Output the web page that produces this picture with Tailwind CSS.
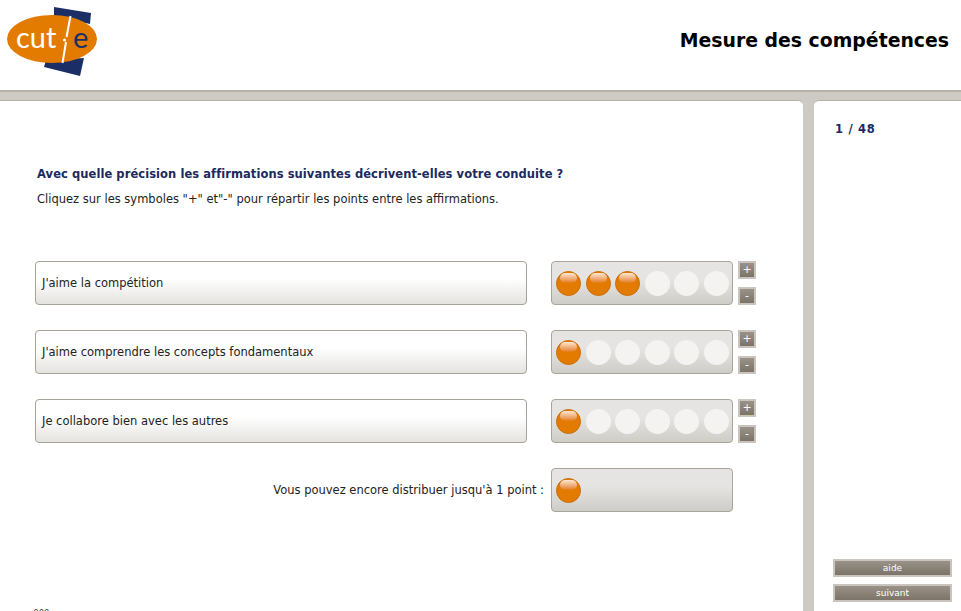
<!DOCTYPE html>
<html lang="fr">
<head>
  <meta charset="UTF-8" />
  <title>Mesure des compétences</title>
  <script src="https://cdn.jsdelivr.net/npm/@tailwindcss/browser@4"></script>
</head>
<body class="h-[611px] overflow-hidden bg-[#cdc9c3] font-['DejaVu_Sans',sans-serif] text-[11.5px] text-[#222]">
  <header class="h-[90px] bg-white flex justify-between">
    <svg class="w-[110px] h-[90px]" viewBox="0 0 110 90">
      <polygon points="54,7 91,13 90,24 54,16" fill="#1b2f66" />
      <polygon points="44,67 80,76 84,58 46,60" fill="#1b2f66" />
      <ellipse cx="52" cy="39" rx="45" ry="24" fill="#e37b00" />
      <path d="M70.5 16 L66.5 37 M66 42 L62.5 63" fill="none" stroke="#fff" stroke-width="2" />
      <circle cx="64.5" cy="40" r="1.5" fill="#fff" />
      <text x="16" y="48" font-family="Lato, sans-serif" font-size="29" fill="#fff">cut</text>
      <text x="73" y="48" font-family="Lato, sans-serif" font-size="29" fill="#1b2f66">e</text>
    </svg>
    <h1 class="pt-[28px] pr-[12px] text-[18.85px] leading-[26px] font-bold text-black">Mesure des compétences</h1>
  </header>

  <div class="h-[10px] border-t-2 border-[#b5b0a8]"></div>

  <main class="flex gap-[11px] h-[511px]">
    <section class="w-[803px] bg-white border-t border-[#b5b0a8] rounded-tr-[5px] pt-[66px] overflow-hidden">
      <h2 class="pl-[37px] leading-[14px] font-bold tracking-[0.07px] text-[#1b2a5e]">Avec quelle précision les affirmations suivantes décrivent-elles votre conduite ?</h2>
      <p class="pl-[37px] mt-[11px] leading-[14px]">Cliquez sur les symboles "+" et"-" pour répartir les points entre les affirmations.</p>

      <div class="mt-[55px] pl-[35px] flex flex-col gap-[25px]">
        <div class="flex items-center">
          <div class="w-[492px] h-[44px] flex items-center pl-[6px] pt-[2px] rounded-[4px] border border-[#a8a296] bg-gradient-to-b from-white from-40% to-[#e4e3e0]">J'aime la compétition</div>
          <div class="ml-[24px] w-[182px] h-[44px] flex items-center gap-[4.5px] pl-[4px] rounded-[4px] border border-[#aaa59b] bg-gradient-to-b from-[#e5e4e2] from-40% to-[#cfcdc8]">
            <span class="w-[25px] h-[25px] shrink-0 rounded-full border border-[#c96f08] bg-[#e37b00] flex justify-center pt-[1px]"><span class="w-[17px] h-[10px] rounded-full bg-gradient-to-b from-[#fbe6d2] to-[#e37b00]"></span></span>
            <span class="w-[25px] h-[25px] shrink-0 rounded-full border border-[#c96f08] bg-[#e37b00] flex justify-center pt-[1px]"><span class="w-[17px] h-[10px] rounded-full bg-gradient-to-b from-[#fbe6d2] to-[#e37b00]"></span></span>
            <span class="w-[25px] h-[25px] shrink-0 rounded-full border border-[#c96f08] bg-[#e37b00] flex justify-center pt-[1px]"><span class="w-[17px] h-[10px] rounded-full bg-gradient-to-b from-[#fbe6d2] to-[#e37b00]"></span></span>
            <span class="w-[25px] h-[25px] shrink-0 rounded-full bg-[#f4f3f1]"></span>
            <span class="w-[25px] h-[25px] shrink-0 rounded-full bg-[#f4f3f1]"></span>
            <span class="w-[25px] h-[25px] shrink-0 rounded-full bg-[#f4f3f1]"></span>
          </div>
          <div class="ml-[5px] flex flex-col gap-[8px]">
            <button class="w-[18px] h-[18px] border-2 border-[#c9c5be] bg-gradient-to-b from-[#9a9288] to-[#7c7468] text-white text-[11px] leading-[12px]">+</button>
            <button class="w-[18px] h-[18px] border-2 border-[#c9c5be] bg-gradient-to-b from-[#9a9288] to-[#7c7468] text-white text-[11px] leading-[12px]">-</button>
          </div>
        </div>

        <div class="flex items-center">
          <div class="w-[492px] h-[44px] flex items-center pl-[6px] pt-[2px] rounded-[4px] border border-[#a8a296] bg-gradient-to-b from-white from-40% to-[#e4e3e0]">J'aime comprendre les concepts fondamentaux</div>
          <div class="ml-[24px] w-[182px] h-[44px] flex items-center gap-[4.5px] pl-[4px] rounded-[4px] border border-[#aaa59b] bg-gradient-to-b from-[#e5e4e2] from-40% to-[#cfcdc8]">
            <span class="w-[25px] h-[25px] shrink-0 rounded-full border border-[#c96f08] bg-[#e37b00] flex justify-center pt-[1px]"><span class="w-[17px] h-[10px] rounded-full bg-gradient-to-b from-[#fbe6d2] to-[#e37b00]"></span></span>
            <span class="w-[25px] h-[25px] shrink-0 rounded-full bg-[#f4f3f1]"></span>
            <span class="w-[25px] h-[25px] shrink-0 rounded-full bg-[#f4f3f1]"></span>
            <span class="w-[25px] h-[25px] shrink-0 rounded-full bg-[#f4f3f1]"></span>
            <span class="w-[25px] h-[25px] shrink-0 rounded-full bg-[#f4f3f1]"></span>
            <span class="w-[25px] h-[25px] shrink-0 rounded-full bg-[#f4f3f1]"></span>
          </div>
          <div class="ml-[5px] flex flex-col gap-[8px]">
            <button class="w-[18px] h-[18px] border-2 border-[#c9c5be] bg-gradient-to-b from-[#9a9288] to-[#7c7468] text-white text-[11px] leading-[12px]">+</button>
            <button class="w-[18px] h-[18px] border-2 border-[#c9c5be] bg-gradient-to-b from-[#9a9288] to-[#7c7468] text-white text-[11px] leading-[12px]">-</button>
          </div>
        </div>

        <div class="flex items-center">
          <div class="w-[492px] h-[44px] flex items-center pl-[6px] pt-[2px] rounded-[4px] border border-[#a8a296] bg-gradient-to-b from-white from-40% to-[#e4e3e0]">Je collabore bien avec les autres</div>
          <div class="ml-[24px] w-[182px] h-[44px] flex items-center gap-[4.5px] pl-[4px] rounded-[4px] border border-[#aaa59b] bg-gradient-to-b from-[#e5e4e2] from-40% to-[#cfcdc8]">
            <span class="w-[25px] h-[25px] shrink-0 rounded-full border border-[#c96f08] bg-[#e37b00] flex justify-center pt-[1px]"><span class="w-[17px] h-[10px] rounded-full bg-gradient-to-b from-[#fbe6d2] to-[#e37b00]"></span></span>
            <span class="w-[25px] h-[25px] shrink-0 rounded-full bg-[#f4f3f1]"></span>
            <span class="w-[25px] h-[25px] shrink-0 rounded-full bg-[#f4f3f1]"></span>
            <span class="w-[25px] h-[25px] shrink-0 rounded-full bg-[#f4f3f1]"></span>
            <span class="w-[25px] h-[25px] shrink-0 rounded-full bg-[#f4f3f1]"></span>
            <span class="w-[25px] h-[25px] shrink-0 rounded-full bg-[#f4f3f1]"></span>
          </div>
          <div class="ml-[5px] flex flex-col gap-[8px]">
            <button class="w-[18px] h-[18px] border-2 border-[#c9c5be] bg-gradient-to-b from-[#9a9288] to-[#7c7468] text-white text-[11px] leading-[12px]">+</button>
            <button class="w-[18px] h-[18px] border-2 border-[#c9c5be] bg-gradient-to-b from-[#9a9288] to-[#7c7468] text-white text-[11px] leading-[12px]">-</button>
          </div>
        </div>

        <div class="flex items-center">
          <div class="w-[509px] pt-[2px] text-right">Vous pouvez encore distribuer jusqu'à 1 point :</div>
          <div class="ml-[7px] w-[182px] h-[44px] flex items-center pl-[4px] rounded-[4px] border border-[#aaa59b] bg-gradient-to-b from-[#e5e4e2] from-40% to-[#cfcdc8]">
            <span class="w-[25px] h-[25px] shrink-0 rounded-full border border-[#c96f08] bg-[#e37b00] flex justify-center pt-[1px]"><span class="w-[17px] h-[10px] rounded-full bg-gradient-to-b from-[#fbe6d2] to-[#e37b00]"></span></span>
          </div>
        </div>
      </div>

      <p class="mt-[96px] pl-[12px] text-[8.5px] leading-[10px] text-[#444]">v&nbsp;&nbsp;&nbsp;&nbsp;&nbsp;&nbsp;000</p>
    </section>

    <aside class="flex-1 bg-white border-t border-[#b5b0a8] rounded-tl-[5px] flex flex-col pl-[19px] pr-[9px] pb-[9px]">
      <div class="pl-[2px] pt-[21px] leading-[14px] font-bold tracking-[0.7px] text-[#1b2a5e]">1 / 48</div>
      <div class="mt-auto flex flex-col gap-[7px]">
        <button class="h-[18px] border-2 border-[#c9c5be] bg-gradient-to-b from-[#9a9288] to-[#7c7468] text-white text-[9px] leading-[12px]">aide</button>
        <button class="h-[18px] border-2 border-[#c9c5be] bg-gradient-to-b from-[#9a9288] to-[#7c7468] text-white text-[9px] leading-[12px]">suivant</button>
      </div>
    </aside>
  </main>
</body>
</html>
